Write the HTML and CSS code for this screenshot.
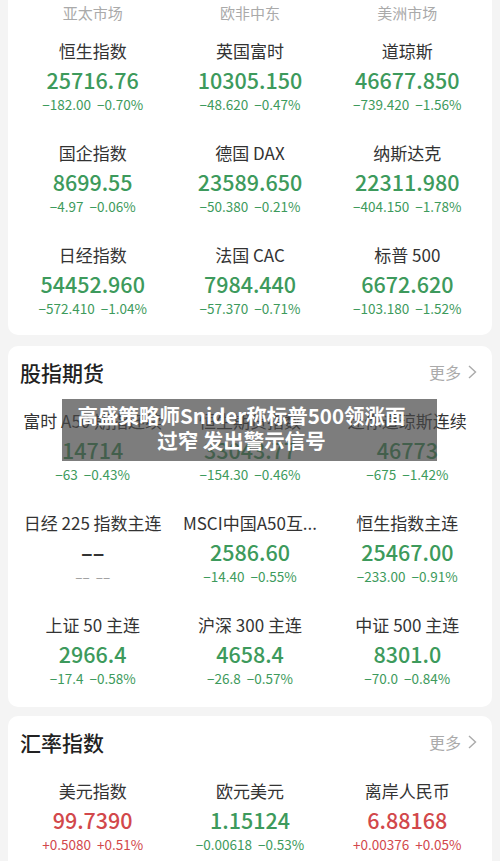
FILE: index.html
```html
<!DOCTYPE html>
<html lang="zh-CN">
<head>
    <meta charset="UTF-8">
    <meta name="viewport" content="width=device-width, initial-scale=1.0">
    <title>全球指数</title>
    <link rel="stylesheet" href="styles.css">
</head>
<body>

<!-- 全球指数 -->
<div class="card card-top">
    <div class="grid regions">
        <div>亚太市场</div>
        <div>欧非中东</div>
        <div>美洲市场</div>
    </div>
    <div class="grid quotes">
        <div class="quote down"><div class="name">恒生指数</div><div class="price">25716.76</div><div class="change">−182.00&nbsp;&nbsp;−0.70%</div></div>
        <div class="quote down"><div class="name">英国富时</div><div class="price">10305.150</div><div class="change">−48.620&nbsp;&nbsp;−0.47%</div></div>
        <div class="quote down"><div class="name">道琼斯</div><div class="price">46677.850</div><div class="change">−739.420&nbsp;&nbsp;−1.56%</div></div>
        <div class="quote down"><div class="name">国企指数</div><div class="price">8699.55</div><div class="change">−4.97&nbsp;&nbsp;−0.06%</div></div>
        <div class="quote down"><div class="name">德国 DAX</div><div class="price">23589.650</div><div class="change">−50.380&nbsp;&nbsp;−0.21%</div></div>
        <div class="quote down"><div class="name">纳斯达克</div><div class="price">22311.980</div><div class="change">−404.150&nbsp;&nbsp;−1.78%</div></div>
        <div class="quote down"><div class="name">日经指数</div><div class="price">54452.960</div><div class="change">−572.410&nbsp;&nbsp;−1.04%</div></div>
        <div class="quote down"><div class="name">法国 CAC</div><div class="price">7984.440</div><div class="change">−57.370&nbsp;&nbsp;−0.71%</div></div>
        <div class="quote down"><div class="name">标普 500</div><div class="price">6672.620</div><div class="change">−103.180&nbsp;&nbsp;−1.52%</div></div>
    </div>
</div>

<!-- 股指期货 -->
<div class="card">
    <div class="card-head">
        <h2>股指期货</h2>
        <a class="more">更多 <svg width="11" height="16" viewBox="0 0 11 16"><path d="M2 2 L8.5 8 L2 14" fill="none" stroke="#aaa" stroke-width="1.4"/></svg></a>
    </div>
    <div class="grid quotes">
        <div class="quote down"><div class="name">富时 A50 期指连续</div><div class="price">14714</div><div class="change">−63&nbsp;&nbsp;−0.43%</div></div>
        <div class="quote down"><div class="name">恒生期货指数</div><div class="price">33043.77</div><div class="change">−154.30&nbsp;&nbsp;−0.46%</div></div>
        <div class="quote down"><div class="name">迷你道琼斯连续</div><div class="price">46773</div><div class="change">−675&nbsp;&nbsp;−1.42%</div></div>
        <div class="quote flat"><div class="name">日经 225 指数主连</div><div class="price">––</div><div class="change">––&nbsp;&nbsp;––</div></div>
        <div class="quote down"><div class="name">MSCI中国A50互...</div><div class="price">2586.60</div><div class="change">−14.40&nbsp;&nbsp;−0.55%</div></div>
        <div class="quote down"><div class="name">恒生指数主连</div><div class="price">25467.00</div><div class="change">−233.00&nbsp;&nbsp;−0.91%</div></div>
        <div class="quote down"><div class="name">上证 50 主连</div><div class="price">2966.4</div><div class="change">−17.4&nbsp;&nbsp;−0.58%</div></div>
        <div class="quote down"><div class="name">沪深 300 主连</div><div class="price">4658.4</div><div class="change">−26.8&nbsp;&nbsp;−0.57%</div></div>
        <div class="quote down"><div class="name">中证 500 主连</div><div class="price">8301.0</div><div class="change">−70.0&nbsp;&nbsp;−0.84%</div></div>
    </div>
</div>

<!-- 汇率指数 -->
<div class="card">
    <div class="card-head">
        <h2>汇率指数</h2>
        <a class="more">更多 <svg width="11" height="16" viewBox="0 0 11 16"><path d="M2 2 L8.5 8 L2 14" fill="none" stroke="#aaa" stroke-width="1.4"/></svg></a>
    </div>
    <div class="grid quotes">
        <div class="quote up"><div class="name">美元指数</div><div class="price">99.7390</div><div class="change">+0.5080&nbsp;&nbsp;+0.51%</div></div>
        <div class="quote down"><div class="name">欧元美元</div><div class="price">1.15124</div><div class="change">−0.00618&nbsp;&nbsp;−0.53%</div></div>
        <div class="quote up"><div class="name">离岸人民币</div><div class="price">6.88168</div><div class="change">+0.00376&nbsp;&nbsp;+0.05%</div></div>
    </div>
</div>

<!-- 新闻标题浮层 -->
<div class="banner">高盛策略师Snider称标普500领涨面<br>过窄 发出警示信号</div>

</body>
</html>
```

FILE: styles.css
```css
body {
    margin: 0;
    padding: 0 8px;
    background-color: #f4f4f4;
    font-family: "Noto Sans CJK SC", "Noto Sans", sans-serif;
    color: #333;
    position: relative;
}
.card {
    background-color: #fff;
    border-radius: 10px;
    padding: 11px 6px 21px;
    margin-bottom: 9px;
}
.card-top {
    margin-top: -12px;
    padding-top: 12px;
    padding-bottom: 19px;
    margin-bottom: 11px;
}
.grid {
    display: grid;
    grid-template-columns: repeat(3, 1fr);
    text-align: center;
}
.regions {
    font-size: 15px;
    line-height: 26px;
    color: #aaa;
    margin-bottom: 12px;
}
.quotes {
    row-gap: 28px;
}
.quote {
    min-width: 0;
}
.name {
    font-size: 17px;
    line-height: 26px;
    color: #333;
    white-space: nowrap;
}
.price {
    font-size: 21.5px;
    line-height: 32px;
    font-weight: 500;
}
.change {
    font-size: 13.5px;
    line-height: 16px;
}
.down {
    color: #3d9a5c;
}
.up {
    color: #d2484b;
}
.flat .price {
    color: #333;
    font-weight: 700;
}
.flat .change {
    color: #999;
}
.card-head {
    display: flex;
    justify-content: space-between;
    align-items: center;
    padding: 0 8px 0 6px;
    margin-bottom: 21px;
}
.card-head h2 {
    margin: 0;
    font-size: 21px;
    line-height: 30px;
    font-weight: 500;
    color: #222;
}
.more {
    display: flex;
    align-items: center;
    gap: 6px;
    font-size: 16px;
    color: #aaa;
}
.banner {
    position: absolute;
    top: 399px;
    left: 62px;
    width: 375px;
    height: 62px;
    box-sizing: border-box;
    padding: 4px 16px 0 0;
    background-color: rgba(70, 70, 70, 0.7);
    color: #fff;
    font-size: 20.5px;
    line-height: 25px;
    font-weight: 700;
    text-align: center;
}
```
